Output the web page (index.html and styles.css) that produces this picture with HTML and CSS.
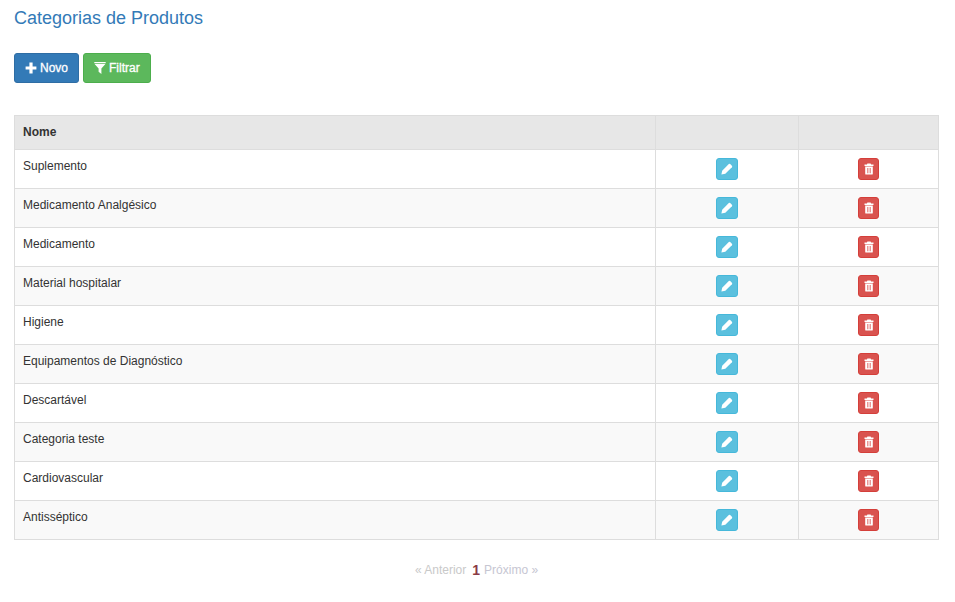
FILE: index.html
```html
<!DOCTYPE html>
<html lang="pt">
<head>
<meta charset="utf-8">
<title>Categorias de Produtos</title>
<link rel="stylesheet" href="styles.css">
</head>
<body>
<svg class="defs" aria-hidden="true">
  <symbol id="i-plus" viewBox="0 0 12 12"><path d="M4.4 0.6h3.2v3.8h3.8v3.2H7.6v3.8H4.4V7.6H0.6V4.4h3.8z"/></symbol>
  <symbol id="i-filter" viewBox="0 0 12 12"><path d="M0.3 0h11.4v1.2H0.3zM0.6 2h10.8L7.4 6.4V12L4.6 9.8V6.4z"/></symbol>
  <symbol id="i-pencil" viewBox="0 0 12 12"><path d="M0.4 11.6l0.8-3.9L7.8 1.1a1 1 0 0 1 1.4 0l1.7 1.7a1 1 0 0 1 0 1.4L4.3 10.8z"/></symbol>
  <symbol id="i-trash" viewBox="0 0 12 12"><path fill-rule="evenodd" d="M4.4 0.4h3.2l0.5 1.1h2.4v1.4H1.5V1.5h2.4zM2.2 3.5h7.6v7.2a0.9 0.9 0 0 1-0.9 0.9H3.1a0.9 0.9 0 0 1-0.9-0.9zM4 5v5.2h0.6V5zM5.7 5v5.2h0.6V5zM7.4 5v5.2h0.6V5z"/></symbol>
</svg>
<main class="page">
  <h1 class="title">Categorias de Produtos</h1>
  <div class="actions">
    <a class="btn btn-primary"><svg class="ico"><use href="#i-plus"/></svg>Novo</a>
    <a class="btn btn-success"><svg class="ico"><use href="#i-filter"/></svg>Filtrar</a>
  </div>
  <table class="grid">
    <colgroup><col class="c-name"><col class="c-edit"><col class="c-del"></colgroup>
    <thead><tr><th>Nome</th><th></th><th></th></tr></thead>
    <tbody>
      <tr><td>Suplemento</td><td class="act"><a class="mini info"><svg class="ico"><use href="#i-pencil"/></svg></a></td><td class="act"><a class="mini danger"><svg class="ico"><use href="#i-trash"/></svg></a></td></tr>
      <tr><td>Medicamento Analgésico</td><td class="act"><a class="mini info"><svg class="ico"><use href="#i-pencil"/></svg></a></td><td class="act"><a class="mini danger"><svg class="ico"><use href="#i-trash"/></svg></a></td></tr>
      <tr><td>Medicamento</td><td class="act"><a class="mini info"><svg class="ico"><use href="#i-pencil"/></svg></a></td><td class="act"><a class="mini danger"><svg class="ico"><use href="#i-trash"/></svg></a></td></tr>
      <tr><td>Material hospitalar</td><td class="act"><a class="mini info"><svg class="ico"><use href="#i-pencil"/></svg></a></td><td class="act"><a class="mini danger"><svg class="ico"><use href="#i-trash"/></svg></a></td></tr>
      <tr><td>Higiene</td><td class="act"><a class="mini info"><svg class="ico"><use href="#i-pencil"/></svg></a></td><td class="act"><a class="mini danger"><svg class="ico"><use href="#i-trash"/></svg></a></td></tr>
      <tr><td>Equipamentos de Diagnóstico</td><td class="act"><a class="mini info"><svg class="ico"><use href="#i-pencil"/></svg></a></td><td class="act"><a class="mini danger"><svg class="ico"><use href="#i-trash"/></svg></a></td></tr>
      <tr><td>Descartável</td><td class="act"><a class="mini info"><svg class="ico"><use href="#i-pencil"/></svg></a></td><td class="act"><a class="mini danger"><svg class="ico"><use href="#i-trash"/></svg></a></td></tr>
      <tr><td>Categoria teste</td><td class="act"><a class="mini info"><svg class="ico"><use href="#i-pencil"/></svg></a></td><td class="act"><a class="mini danger"><svg class="ico"><use href="#i-trash"/></svg></a></td></tr>
      <tr><td>Cardiovascular</td><td class="act"><a class="mini info"><svg class="ico"><use href="#i-pencil"/></svg></a></td><td class="act"><a class="mini danger"><svg class="ico"><use href="#i-trash"/></svg></a></td></tr>
      <tr><td>Antisséptico</td><td class="act"><a class="mini info"><svg class="ico"><use href="#i-pencil"/></svg></a></td><td class="act"><a class="mini danger"><svg class="ico"><use href="#i-trash"/></svg></a></td></tr>
    </tbody>
  </table>
  <nav class="pager">
    <span class="off">« Anterior</span>
    <span class="cur">1</span>
    <span class="off alt">Próximo »</span>
  </nav>
</main>
</body>
</html>
```
FILE: styles.css
```css
* { box-sizing: border-box; }
html, body { margin: 0; background: #fff; }
body {
  font-family: "Liberation Sans", Arial, sans-serif;
  font-size: 12px;
  line-height: 17px;
  color: #333;
}
.defs { display: none; }
.page { padding: 0 16px 0 14px; }
.title {
  margin: 0;
  padding-top: 8px;
  font-size: 18px;
  line-height: 20px;
  font-weight: 400;
  color: #337ab7;
}
.actions {
  display: flex;
  gap: 4px;
  margin-top: 25px;
  margin-bottom: 32px;
}
.btn {
  display: inline-flex;
  align-items: center;
  height: 30px;
  padding: 0 10px;
  border: 1px solid transparent;
  border-radius: 3px;
  color: #fff;
  font-size: 12px;
  -webkit-text-stroke: 0.3px #fff;
}
.btn .ico { width: 12px; height: 12px; margin-right: 3px; fill: #fff; }
.btn-primary { background: #337ab7; border-color: #2e6da4; }
.btn-success { background: #5cb85c; border-color: #4cae4c; }
.grid {
  width: 925px;
  table-layout: fixed;
  border-collapse: separate;
  border-spacing: 0;
  border-top: 1px solid #ddd;
  border-left: 1px solid #ddd;
}
.c-name { width: 641px; }
.c-edit { width: 143px; }
.c-del { width: 140px; }
.grid th, .grid td {
  border-right: 1px solid #ddd;
  border-bottom: 1px solid #ddd;
  padding: 8px;
  text-align: left;
  vertical-align: top;
}
.grid th { height: 34px; background: #e7e7e7; font-weight: 700; }
.grid td { height: 39px; }
.grid tbody tr:nth-child(even) { background: #f9f9f9; }
.grid td.act { text-align: center; }
.mini {
  display: inline-flex;
  align-items: center;
  justify-content: center;
  width: 22px;
  height: 22px;
  border: 1px solid transparent;
  border-radius: 3px;
  vertical-align: top;
}
.mini .ico { width: 12px; height: 12px; fill: #fff; }
.info { background: #5bc0de; border-color: #46b8da; }
.danger { width: 21px; background: #d9534f; border-color: #d43f3a; }
.pager {
  margin-top: 22px;
  display: flex;
  justify-content: center;
  gap: 4px;
}
.off { color: #c9c9c9; }
.off.alt { color: #c6c6d2; }
.cur { margin-left: 2px; color: #8a3a45; font-weight: 700; font-size: 14px; }
```
